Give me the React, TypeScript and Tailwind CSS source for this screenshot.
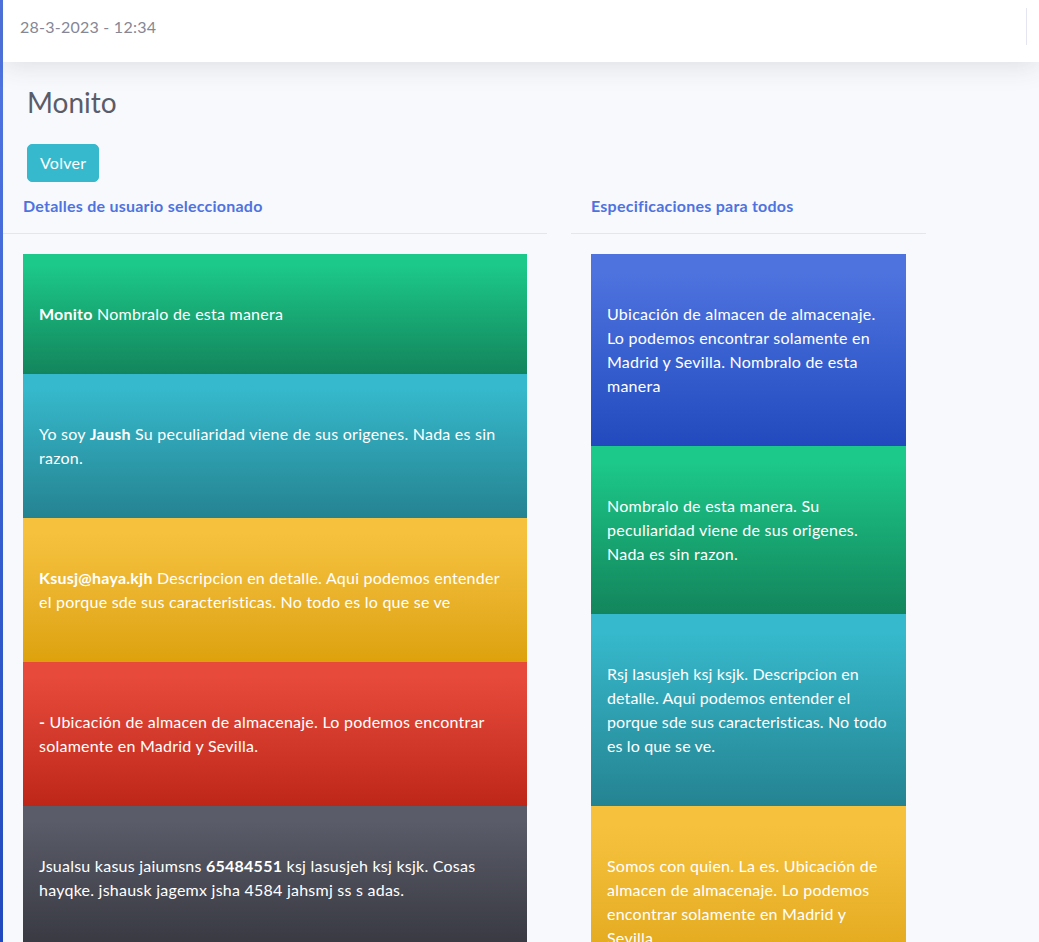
import React from "react";

type Card = { grad: string; body: React.ReactNode; track?: string };

const leftCards: Card[] = [
  {
    grad: "from-[#1cc88a] from-10% to-[#13855c]",
    body: (
      <>
        <b>Monito</b> Nombralo de esta manera
      </>
    ),
  },
  {
    grad: "from-[#36b9cc] from-10% to-[#258391]",
    body: (
      <>
        Yo soy <b>Jaush</b> Su peculiaridad viene de sus origenes. Nada es sin razon.
      </>
    ),
  },
  {
    grad: "from-[#f6c23e] from-10% to-[#dda20a]",
    body: (
      <>
        <b>Ksusj@haya.kjh</b> Descripcion en detalle. Aqui podemos entender el porque sde sus
        caracteristicas. No todo es lo que se ve
      </>
    ),
  },
  {
    grad: "from-[#e74a3b] from-10% to-[#be2617]",
    body: (
      <>
        <b>-</b> Ubicación de almacen de almacenaje. Lo podemos encontrar solamente en Madrid y
        Sevilla.
      </>
    ),
  },
  {
    grad: "from-[#5a5c69] from-10% to-[#373840]",
    body: (
      <>
        Jsualsu kasus jaiumsns <b>65484551</b> ksj lasusjeh ksj ksjk. Cosas hayqke. jshausk jagemx
        jsha 4584 jahsmj ss s adas.
      </>
    ),
  },
];

const rightCards: Card[] = [
  {
    grad: "from-[#4e73df] from-10% to-[#224abe]",
    body: "Ubicación de almacen de almacenaje. Lo podemos encontrar solamente en Madrid y Sevilla. Nombralo de esta manera",
  },
  {
    grad: "from-[#1cc88a] from-10% to-[#13855c]",
    body: "Nombralo de esta manera. Su peculiaridad viene de sus origenes. Nada es sin razon.",
  },
  {
    grad: "from-[#36b9cc] from-10% to-[#258391]",
    body: "Rsj lasusjeh ksj ksjk. Descripcion en detalle. Aqui podemos entender el porque sde sus caracteristicas. No todo es lo que se ve.",
    track: "tracking-[0.008em]",
  },
  {
    grad: "from-[#f6c23e] from-10% to-[#dda20a]",
    body: "Somos con quien. La es. Ubicación de almacen de almacenaje. Lo podemos encontrar solamente en Madrid y Sevilla.",
  },
];

function Column({ title, cards, width }: { title: string; cards: Card[]; width: string }) {
  return (
    <div className={width}>
      <div className="border-b border-[#e3e6f0] px-5 pt-3 pb-[15px]">
        <h6 className="text-base leading-6 font-bold text-[#4e73df]">{title}</h6>
      </div>
      <div className="flex flex-col px-5 pt-5">
        {cards.map((c, i) => (
          <div
            key={i}
            className={`bg-linear-to-b ${c.grad} ${c.track ?? ""} px-4 py-12 text-base leading-6 text-white`}
          >
            {c.body}
          </div>
        ))}
      </div>
    </div>
  );
}

export default function App() {
  return (
    <div className="flex h-[942px] overflow-hidden bg-[#f8f9fc] font-['Lato',sans-serif] tracking-[0.015em]">
      <div className="w-[3px] shrink-0 bg-linear-to-b from-[#4e73df] from-10% to-[#224abe]" />
      <div className="flex-1">
        <div className="relative z-10 flex h-[62px] items-center justify-between bg-white pb-[9px] pl-[17px] shadow-[0_0.15rem_1.75rem_0_rgba(58,59,69,0.15)]">
          <span className="text-base text-[#858796]">28-3-2023 - 12:34</span>
          <div className="mr-3 h-[37px] w-px bg-[#e3e6f0]" />
        </div>

        <div className="px-6 pt-6">
          <h1 className="mb-6 text-[28px] leading-[1.2] tracking-normal text-[#5a5c69]">Monito</h1>
          <button className="rounded-[5px] border border-[#36b9cc] bg-[#36b9cc] px-3 py-1.5 text-base leading-6 text-white">
            Volver
          </button>
        </div>

        <div className="flex">
          <Column title="Detalles de usuario seleccionado" cards={leftCards} width="w-[544px]" />
          <Column title="Especificaciones para todos" cards={rightCards} width="ml-[24px] w-[355px]" />
        </div>
      </div>
    </div>
  );
}
